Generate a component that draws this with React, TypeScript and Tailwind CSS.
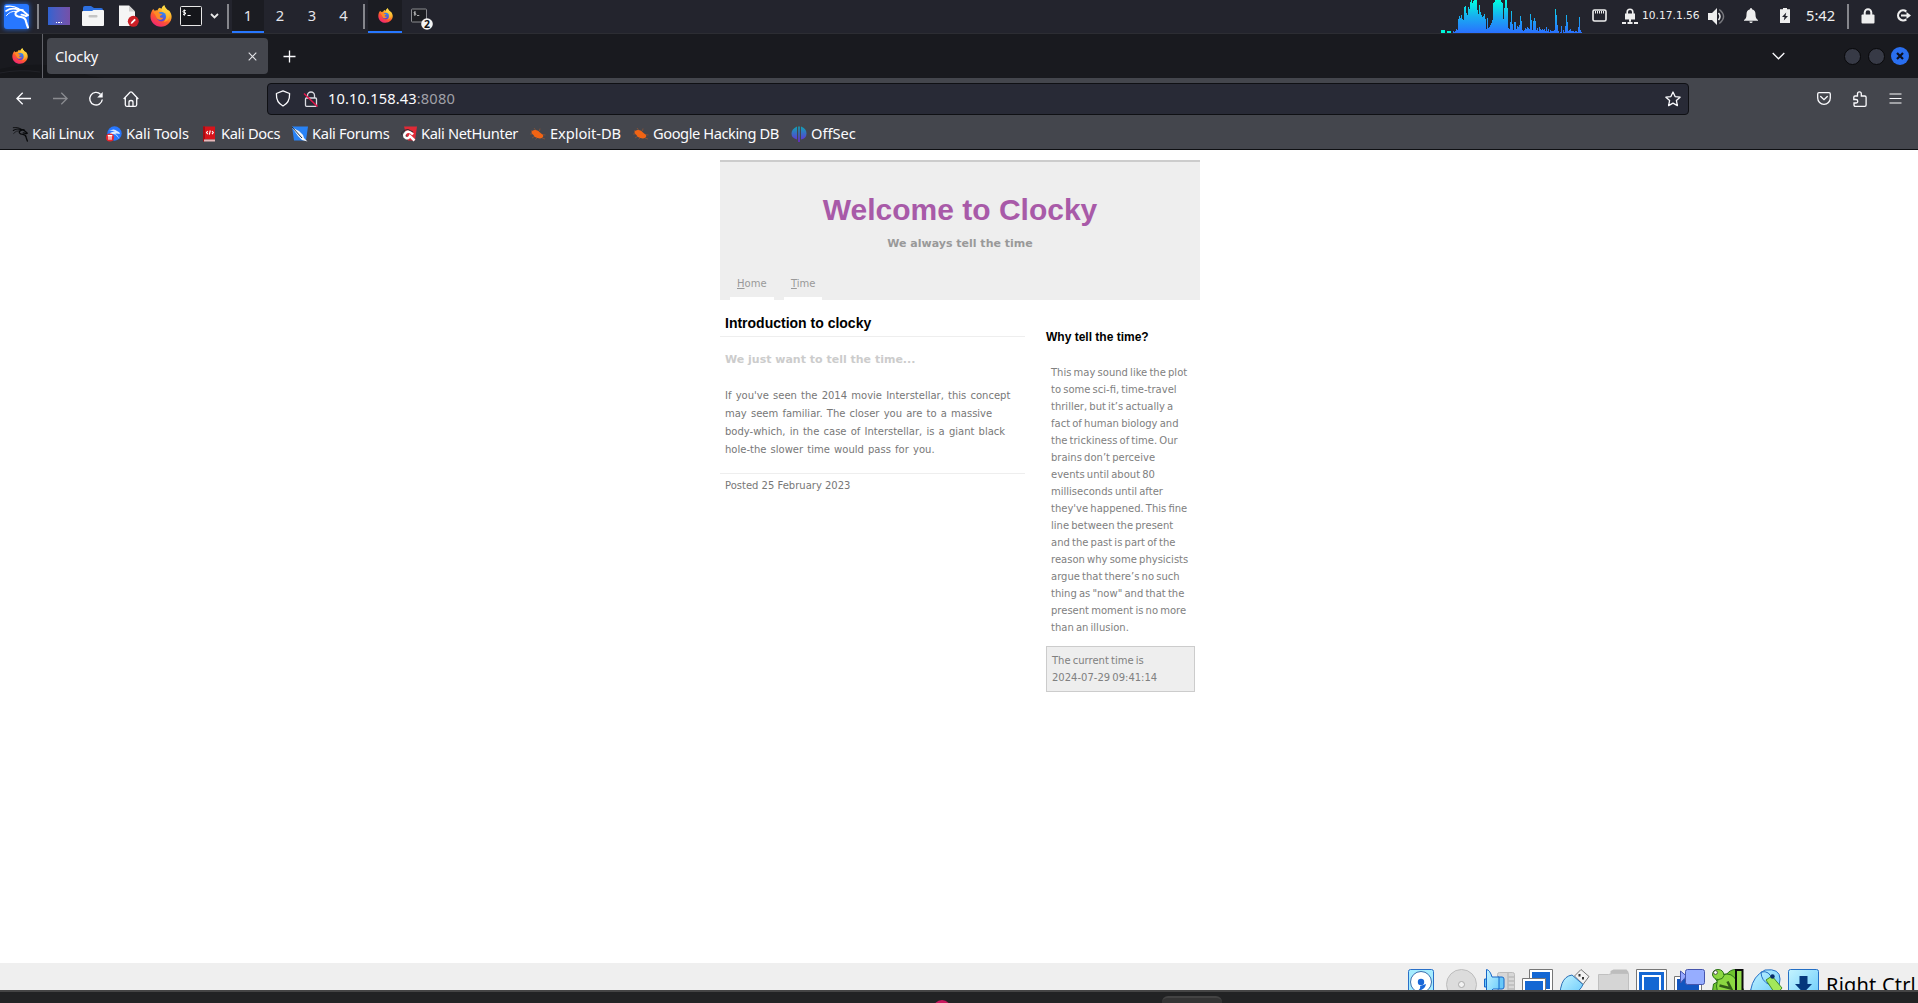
import React from "react";

const UI = "font-['Noto_Sans',sans-serif]";

function Dragon({ size, color }: { size: number; color: string }) {
  return (
    <svg width={size} height={size} viewBox="0 0 25 25" fill="none" stroke={color} strokeLinecap="round" strokeLinejoin="round">
      <path d="M2 2.500Q9 1.200 14.500 4.600" strokeWidth="1.300" />
      <path d="M2 7Q8 3 14.500 5.800L19 6" strokeWidth="1.600" />
      <path d="M2.500 11.500Q6 6.800 12 7.300" strokeWidth="1" />
      <path d="M15 5.500Q18.500 5.800 20.500 8.200L24 11.200 22 12.200Q20 10.800 17.500 10.600" strokeWidth="1.900" />
      <path d="M15 6.500Q10.500 8 11.800 11 12.800 12.800 17 13 21.500 13.600 22 17.500 22.600 20 24 23.500" strokeWidth="2.100" />
    </svg>
  );
}

function Firefox({ size, className = "" }: { size: number; className?: string }) {
  return (
    <svg width={size} height={size} viewBox="0 0 24 24" className={`shrink-0 ${className}`}>
      <defs>
        <linearGradient id="fxBody" x1="0.85" y1="0" x2="0.25" y2="1">
          <stop offset="0" stopColor="#fff44f" />
          <stop offset="0.35" stopColor="#ffb02a" />
          <stop offset="0.62" stopColor="#ff5a2c" />
          <stop offset="1" stopColor="#f0207a" />
        </linearGradient>
        <linearGradient id="fxTail" x1="0.6" y1="0" x2="0.4" y2="1">
          <stop offset="0" stopColor="#ffe54a" />
          <stop offset="1" stopColor="#ff9a20" />
        </linearGradient>
        <linearGradient id="fxGlobe" x1="0.7" y1="0" x2="0.3" y2="1">
          <stop offset="0" stopColor="#2f8ff5" />
          <stop offset="1" stopColor="#6a35c9" />
        </linearGradient>
      </defs>
      <path d="M3.6 4.4c.5 1 1 1.600 1.600 2C6 5.800 7 5.700 8.100 5.900 8.500 4.700 9.300 3.700 10.500 3.100L12.600 4.200C13 2.500 14 1.200 15.600.4c.4 1.900 1.500 3.100 3 4.400.5.500.9 1 1.200 1.600l.5-1c2 2 3.300 4.700 3.300 7.500C23.500 19 18.300 23.700 12 23.700S.5 19 .5 12.600C.5 9.500 1.700 6.500 3.600 4.400Z" fill="url(#fxBody)" />
      <path d="M15.600.4c.4 1.900 1.500 3.100 3 4.400 2.400 2.200 3.300 5 2.400 8.200-.8 3-3 5-6 5.800 1.900-2.200 2.600-5 1.600-7.300-.8-2-2.700-3.200-3.700-5C12.100 4.300 13.500 1.500 15.600.4Z" fill="url(#fxTail)" />
      <circle cx="12.300" cy="12.800" r="5.200" fill="url(#fxGlobe)" />
      <path d="M3.800 7.800c2.700-.8 5.400-.2 7 1.800l2.600.2c-.3 1.300-2.400 1.500-2.700 2.500.3 1.700 2.300 2.100 4 1.300-.9 2.500-4.300 3.400-6.500 1.800C6.500 13.700 6.400 10.500 3.800 7.800Z" fill="#ff8a26" />
    </svg>
  );
}

const Divider = ({ className = "" }: { className?: string }) => (
  <div className={`h-[25px] w-[2px] shrink-0 bg-[#85868c] ${className}`} />
);

const bars: number[] = [
  2, 1, 2, 4, 3, 14, 17, 15, 18, 14, 13, 26, 27, 20, 18, 26, 24, 31, 33, 30, 32, 33, 33, 33, 23, 19, 28, 21, 18, 16, 17, 19, 14, 4, 15, 5,
  6, 8, 10, 13, 30, 31, 33, 33, 33, 33, 33, 33, 31, 30, 14, 25, 33, 33, 25, 5, 4, 11, 22, 9, 3, 11, 11, 4, 7, 6, 8, 17, 12, 3, 2, 3, 5, 4,
  6, 5, 4, 19, 13, 3, 12, 15, 12, 3, 5, 2, 6, 4, 3, 4, 3, 4, 2, 6, 2, 4, 1, 3, 2, 2, 2, 3, 24, 18, 8, 2, 0, 1, 7, 0, 3, 1, 7, 18, 11, 2,
  3, 4, 2, 2, 2, 1, 2, 2, 1, 6, 16, 3, 1,
];

function LoadGraph() {
  return (
    <svg width="142" height="33" viewBox="0 0 142 33" className="shrink-0 self-start" shapeRendering="crispEdges">
      <defs>
        <linearGradient id="load" gradientUnits="userSpaceOnUse" x1="0" y1="0" x2="0" y2="33">
          <stop offset="0" stopColor="#00ffdf" />
          <stop offset="0.5" stopColor="#18aef0" />
          <stop offset="1" stopColor="#2a70ff" />
        </linearGradient>
      </defs>
      <path d="M0 30h4v3H0zM6 31h4v2H6z" fill="#00f5d8" />
      {bars.map((h, i) => (
        <rect key={i} x={12 + i} y={33 - h} width="1" height={h} fill="url(#load)" />
      ))}
    </svg>
  );
}

function Panel() {
  return (
    <div className={`flex h-[33px] bg-[#23242d] text-[14.67px] text-[#e4e5ea] ${UI}`}>
      <div className="flex h-[33px] items-center">
        <div className="-mt-px ml-[4px] flex size-[25px] items-center justify-center rounded-[3px] bg-[#2777ff] shadow-[0_0_4px_1px_#2777ff99]">
          <Dragon size={25} color="#fff" />
        </div>
        <Divider className="ml-[8px]" />
        <div className="-mt-px ml-[9px] flex h-[18px] w-[22px] items-end justify-center gap-px bg-linear-to-r from-[#2f62d0] to-[#7550a8] pb-[2px]">
          <i className="size-[1.500px] bg-white" />
          <i className="size-[1.500px] bg-white" />
          <i className="size-[1.500px] bg-white" />
        </div>
        <svg width="22" height="20" viewBox="0 0 22 20" className="-mt-px ml-[12px]">
          <path d="M1 7V2q0-2 2-2h6l3 2h7q2 0 2 2v3z" fill="#2d70e0" />
          <path d="M0 6q0-1 1-1h9l1.500-1H21q1 0 1 1v14q0 1-1 1H1q-1 0-1-1z" fill="#f5f5f5" />
          <rect x="6.500" y="9" width="9" height="2.500" rx="1" fill="#c4c4c4" />
        </svg>
        <svg width="22" height="22" viewBox="0 0 22 22" className="-mt-px ml-[14px]">
          <path d="M1 .500h10l6 6V21H1z" fill="#f5f5f5" />
          <path d="M11 .500v6h6z" fill="#cfcfcf" />
          <circle cx="15.300" cy="16.300" r="5.500" fill="#cc1f26" />
          <path d="m12.700 19 .6-2 3.200-3.200 1.300 1.300-3.200 3.200z" fill="#fff" />
        </svg>
        <Firefox size={22} className="-mt-px ml-[10px]" />
        <svg width="22" height="20" viewBox="0 0 22 20" className="-mt-px ml-[8px]">
          <rect x=".5" y=".5" width="21" height="19" rx="1" fill="#15161b" stroke="#e8e8e8" />
          <path d="M5.700 4.500Q3 4 3 5.300T4.500 6.500 5.500 8 3 8.200M4.300 3.500v6M7.500 9.500h3.200" fill="none" stroke="#fff" strokeWidth="1" />
        </svg>
        <svg width="9" height="6" viewBox="0 0 9 6" className="-mt-px ml-[8px]">
          <path d="m1 1 3.500 3.500L8 1" fill="none" stroke="#e8e8e8" strokeWidth="1.800" />
        </svg>
        <Divider className="ml-[8px]" />
        <div className="ml-[3px] flex h-[33px] w-[32px] items-center justify-center border-b-2 border-[#2777ff] bg-[#1b1c22] pb-px">1</div>
        <div className="flex w-[32px] justify-center pb-[3px]">2</div>
        <div className="flex w-[32px] justify-center pb-[3px]">3</div>
        <div className="flex w-[31px] justify-center pb-[3px]">4</div>
        <Divider className="ml-[4px]" />
        <div className="ml-[3px] flex h-[33px] w-[34px] items-center justify-center border-b-2 border-[#2777ff] bg-[#1b1c22]">
          <Firefox size={15} />
        </div>
        <svg width="24" height="23" viewBox="0 0 24 23" className="mt-[5px] ml-[9px]">
          <rect x=".5" y="1" width="15" height="13" rx=".8" fill="#1c1d21" stroke="#8b8c90" />
          <path d="M4.600 4Q3 3.800 3 4.700t1 .8.800 1.100-2 .2M3.900 3.200v4M6 7.500h2.300" fill="none" stroke="#d0d0d0" strokeWidth=".8" />
          <circle cx="16" cy="16" r="5.800" fill="#f4f4f4" />
          <text x="16" y="19.700" textAnchor="middle" fontSize="10.500" fontWeight="700" fill="#111" fontFamily="Noto Sans">2</text>
        </svg>
      </div>
      <div className="ml-auto flex h-[33px] items-center text-[#eeeeee]">
        <LoadGraph />
        <svg width="15" height="13" viewBox="0 0 15 13" className="-mt-[2px] ml-[9px]">
          <rect x="1" y="1" width="13" height="11" rx="1.500" fill="none" stroke="#eee" strokeWidth="1.600" />
          <path d="M3.500 2v2.500M5.500 2v2.500M7.500 2v2.500M9.500 2v2.500M11.500 2v2.500" stroke="#eee" strokeWidth="1" />
        </svg>
        <svg width="16" height="16" viewBox="0 0 16 16" className="-mt-px ml-[15px]">
          <path d="M5.200 6V4a2.800 2.800 0 0 1 5.600 0v2" fill="none" stroke="#eee" strokeWidth="1.600" />
          <path d="M3 5.500h10v6H9v2.300H7v-2.300H3zM0 14h4v2H0zM5.500 14h5v2h-5zM12 14h4v2h-4z" fill="#eee" />
        </svg>
        <span className="-mt-[2px] ml-[4px] w-[62px] font-['DejaVu_Sans',sans-serif] text-[10.67px]">10.17.1.56</span>
        <svg width="18" height="17" viewBox="0 0 18 17" className="-mt-px ml-[4px]">
          <path d="M0 5h4l5-5v17l-5-5H0z" fill="#eee" />
          <path d="M10.500 5q3 3.500 0 7" fill="none" stroke="#eee" strokeWidth="1.500" />
          <path d="M11.300 1.500q8.500 7 0 14" fill="none" stroke="#77787d" strokeWidth="1.500" />
        </svg>
        <svg width="14" height="15" viewBox="0 0 14 15" className="-mt-[2px] ml-[18px]">
          <path d="M7 0q1 0 1 1.200c2.500.5 3.500 2.500 3.500 5C11.500 9.500 12 10.500 14 12v.800H0V12c2-1.500 2.500-2.500 2.500-5.800 0-2.500 1-4.500 3.500-5Q6 0 7 0ZM5.300 13.500h3.400Q8.500 15 7 15t-1.700-1.500z" fill="#eee" />
        </svg>
        <svg width="10" height="15" viewBox="0 0 10 15" className="-mt-[2px] ml-[22px]">
          <path d="M3 0h4v1.200h3V15H0V1.200h3z" fill="#eee" />
          <path d="M6.200 4.500 2 9h2.500L3.800 12.500 8 8H5.500z" fill="#23242d" />
        </svg>
        <span className="-mt-[3px] ml-[16px] w-[30px]">5:42</span>
        <Divider className="ml-[11px]" />
        <svg width="14" height="16" viewBox="0 0 14 16" className="-mt-px ml-[12px]">
          <path d="M3.700 7V4.500a3.300 3.300 0 0 1 6.600 0V7" fill="none" stroke="#eee" strokeWidth="2" />
          <rect x=".5" y="6.500" width="13" height="9" rx="1" fill="#eee" />
        </svg>
        <svg width="15" height="13" viewBox="0 0 15 13" className="-mt-[2px] mr-[7px] ml-[21px]">
          <path d="M10.300 2.600A5 5 0 1 0 10.300 10.300" fill="none" stroke="#eee" strokeWidth="2.200" />
          <path d="M5 5.500h5.500V3L15 6.500 10.500 10V7.500H5z" fill="#eee" />
        </svg>
      </div>
    </div>
  );
}

function TabBar() {
  return (
    <div className={`relative flex h-[45px] items-center overflow-hidden border-t border-[#2c2d33] bg-[#191a1f] text-[#fbfbfe] ${UI}`}>
      <svg width="110" height="45" className="pointer-events-none absolute top-0 left-0">
        <path d="M0 35Q25 30 45 31T90 42L110 45H0z" fill="#15161a" />
        <path d="M0 39q20-4 40-1" stroke="#212228" fill="none" />
      </svg>
      <Firefox size={16} className="relative -mt-px ml-[12px]" />
      <div className="relative ml-[14px] h-[44px] w-px bg-[#62636a]" />
      <div className="relative ml-[4px] flex h-[36px] w-[221px] items-center rounded-[4px] bg-[#44464d] pl-[8px] text-[14.67px]">
        <span className="tracking-[-0.2px]">Clocky</span>
        <svg width="9" height="9" viewBox="0 0 9 9" className="mr-[11px] ml-auto">
          <path d="m.7.700 7.600 7.600M8.300.700.7 8.300" stroke="#e4e4e8" strokeWidth="1.100" />
        </svg>
      </div>
      <svg width="13" height="13" viewBox="0 0 13 13" className="mt-px ml-[15px]">
        <path d="M6.500 .500v12M.500 6.500h12" stroke="#fbfbfe" strokeWidth="1.300" />
      </svg>
      <svg width="13" height="8" viewBox="0 0 13 8" className="ml-auto">
        <path d="m.7 1 5.800 5.800L12.300 1" fill="none" stroke="#fbfbfe" strokeWidth="1.300" />
      </svg>
      <div className="ml-[59px] size-[17px] rounded-full border border-[#08080a] bg-[#373a46]" />
      <div className="ml-[7px] size-[17px] rounded-full border border-[#08080a] bg-[#373a46]" />
      <div className="mr-[9px] ml-[6px] flex size-[18px] items-center justify-center rounded-full bg-[#2a6ff0]">
        <svg width="8" height="8" viewBox="0 0 8 8">
          <path d="m1 1 6 6M7 1 1 7" stroke="#0d1020" strokeWidth="2.200" />
        </svg>
      </div>
    </div>
  );
}

function Toolbar() {
  return (
    <div className="flex h-[39px] items-center bg-[#44464d] pt-[2px] text-[#fbfbfe]">
      <svg width="15" height="13" viewBox="0 0 15 13" className="ml-[16px]">
        <path d="M6.700.7.900 6.500l5.800 5.800M1 6.500h14" fill="none" stroke="#fbfbfe" strokeWidth="1.300" />
      </svg>
      <svg width="15" height="13" viewBox="0 0 15 13" className="ml-[22px]">
        <path d="m8.300.7 5.800 5.800-5.800 5.800M14 6.500H0" fill="none" stroke="#8a8b90" strokeWidth="1.300" />
      </svg>
      <svg width="16" height="16" viewBox="0 0 16 16" className="ml-[20px]">
        <path d="M12.500 3.200A6.300 6.300 0 1 0 14.300 8.500" fill="none" stroke="#fbfbfe" strokeWidth="1.400" />
        <path d="M14.700 1v5.500H9.200z" fill="#fbfbfe" />
      </svg>
      <svg width="16" height="16" viewBox="0 0 16 16" className="ml-[19px]">
        <path d="M.7 8 7 1.300q1-.8 2 0L15.300 8M2.300 6.500v7.300q0 1.500 1.500 1.500h8.400q1.500 0 1.500-1.500V6.500M6 15v-3.800q0-1.700 2-1.700t2 1.700V15" fill="none" stroke="#fbfbfe" strokeWidth="1.300" />
      </svg>
      <div className={`ml-[128px] flex h-[32px] w-[1422px] items-center rounded-[4px] border border-[#0f1014] bg-[#282a36] text-[14.67px] ${UI}`}>
        <svg width="16" height="17" viewBox="0 0 16 17" className="ml-[7px]">
          <path d="M8 .900 14.600 3.500C14.800 9 13.200 13.500 8 16 2.800 13.500 1.200 9 1.400 3.500Z" fill="none" stroke="#fbfbfe" strokeWidth="1.300" strokeLinejoin="round" />
        </svg>
        <svg width="16" height="16" viewBox="0 0 16 16" className="ml-[12px]">
          <path d="M4.500 7V4.500a3.500 3.500 0 0 1 7 0V7M3.500 7h9q1 0 1 1v6.300q0 1-1 1h-9q-1 0-1-1V8q0-1 1-1z" fill="none" stroke="#dcdce2" strokeWidth="1.300" />
          <path d="m1 2.500 13.500 13" stroke="#e6154b" strokeWidth="1.500" />
        </svg>
        <span className="-mt-px ml-[9px] tracking-[0.13px]">10.10.158.43<span className="text-[#a0a1a8]">:8080</span></span>
        <svg width="16" height="16" viewBox="0 0 16 16" className="mr-[7px] ml-auto">
          <path d="m8 1 2.100 4.600 5 .6-3.700 3.400 1 5L8 12.100l-4.400 2.500 1-5L.9 6.200l5-.6z" fill="none" stroke="#fbfbfe" strokeWidth="1.300" strokeLinejoin="round" />
        </svg>
      </div>
      <svg width="14" height="13" viewBox="0 0 14 13" className="ml-auto">
        <path d="M2 .700h10q1.300 0 1.300 1.300v4a6.300 6.300 0 0 1-12.600 0V2Q.700.700 2 .700ZM3.700 4.500 7 7.700l3.300-3.200" fill="none" stroke="#fbfbfe" strokeWidth="1.300" strokeLinecap="round" />
      </svg>
      <svg width="14" height="16" viewBox="0 0 14 16" className="ml-[22px]">
        <path d="M4.500 4V2.800a1.900 1.900 0 0 1 3.800 0V5h3.500q1.300 0 1.300 1.300v7.700q0 1.300-1.300 1.300H2.300Q1 15.300 1 14v-2h2a1.400 1.400 0 0 0 0-3.500H.800V6.300Q.800 5 2 5h2.500z" fill="none" stroke="#fbfbfe" strokeWidth="1.300" />
      </svg>
      <svg width="13" height="11" viewBox="0 0 13 11" className="-mt-px mr-[16px] ml-[22px]">
        <path d="M.500 1h12M.500 5.500h12M.500 10h12" stroke="#fbfbfe" strokeWidth="1.200" />
      </svg>
    </div>
  );
}

const Bug = () => (
  <svg width="16" height="16" viewBox="0 0 16 16">
    <path d="M1 4.500 6 7M4 2l3 4M0 8l5 0M15.500 9 11 8.500M2 12l5-3M5.500 13.500l3-3M15 13l-3-1M10 2.500 9.500 5" stroke="#a6572c" strokeWidth=".6" />
    <path d="M1.500 5.500q1.500-2 4-1.500 3 .3 4.500 2.500l3 2.500q.7 1.500-.5 2.500-2 1.500-5 .5Q4 11 3 8.500 1 7.500 1.500 5.500z" fill="#f16414" />
  </svg>
);

const bookmarks: { label: string; box: string; icon: React.ReactNode }[] = [
  { label: "Kali Linux", box: "w-[94px] tracking-[-0.42px]", icon: <Dragon size={16} color="#07080a" /> },
  {
    label: "Kali Tools", box: "w-[95px] tracking-[-0.15px]",
    icon: (
      <svg width="16" height="16" viewBox="0 0 16 16">
        <circle cx="8.500" cy="7.500" r="7.200" fill="#2777ff" />
        <path d="M3 5q5-3 8 0 3 1 3 3-4-1-5 0 3 1 4 5-3-5-6-5T3 9q2-4 6-3-3-2-6-1z" fill="#d9e8ff" />
        <circle cx="4" cy="11.500" r="4" fill="#e8262c" />
        <path d="M1.800 9.700h4.500M3 9.700v4M5 9.700v4" stroke="#fff" strokeWidth="1.200" />
      </svg>
    ),
  },
  {
    label: "Kali Docs", box: "w-[91px] tracking-[-0.35px]",
    icon: (
      <svg width="16" height="16" viewBox="0 0 16 16">
        <path d="M2 .500h12v13H2z" fill="#d8141b" />
        <path d="M2 .500h2v15H2z" fill="#a50d13" />
        <path d="M3 13.500h11v2H3z" fill="#e8b9bb" />
        <path d="M6.800 5 5.500 6.500l1.300 1.700M11 5l1.300 1.500L11 8.200M9.300 4.500l-1 4.200" fill="none" stroke="#fff" strokeWidth="1.100" />
      </svg>
    ),
  },
  {
    label: "Kali Forums", box: "w-[109px] tracking-[-0.33px]",
    icon: (
      <svg width="16" height="16" viewBox="0 0 16 16">
        <path d="M0 .500h16L14 14.500H2z" fill="#2882f5" />
        <path d="M0 1.500 7 5l4 4 1 3 3.500 3.500L10 14 6 10Z" fill="#f3f7fb" />
        <path d="m0 1 10 11" stroke="#25303f" strokeWidth="1" />
      </svg>
    ),
  },
  {
    label: "Kali NetHunter", box: "w-[129px] tracking-[-0.35px]",
    icon: (
      <svg width="16" height="16" viewBox="0 0 16 16">
        <path d="M3 .500h13l-2 14H7z" fill="#e02a36" />
        <path d="M13.500 14.500 9 10q-1.500 3-4 2-3.500-2 0-5.500 3-2.500 7 2" fill="none" stroke="#fff" strokeWidth="2.500" />
        <path d="M0 9q1-5 7-5.500l5 2.500" fill="none" stroke="#332b30" strokeWidth="1" />
      </svg>
    ),
  },
  { label: "Exploit-DB", box: "w-[103px] tracking-[-0.05px]", icon: <Bug /> },
  { label: "Google Hacking DB", box: "w-[158px] tracking-[-0.43px]", icon: <Bug /> },
  {
    label: "OffSec", box: "w-[80px]",
    icon: (
      <svg width="16" height="16" viewBox="0 0 16 16">
        <defs>
          <linearGradient id="offsec" x1="0" y1="0" x2="0" y2="1">
            <stop offset="0" stopColor="#10a5b5" />
            <stop offset="1" stopColor="#6a27d8" />
          </linearGradient>
        </defs>
        <path d="M6 1.500v12Q.500 12 .500 7.500T6 .500zM7.200.500h1.600V16H7.200zM10 .500q5.500 2 5.500 7t-5.500 6z" fill="url(#offsec)" />
      </svg>
    ),
  },
];

function Bookmarks() {
  return (
    <div className={`flex h-[33px] items-center border-b border-[#0e0f12] bg-[#44464d] pl-[12px] text-[14.67px] text-[#fbfbfe] ${UI}`}>
      {bookmarks.map((b) => (
        <div key={b.label} className={`flex shrink-0 items-center gap-[4px] whitespace-nowrap ${b.box}`}>
          <span className="shrink-0 pt-px">{b.icon}</span>
          <span className="-mt-px">{b.label}</span>
        </div>
      ))}
    </div>
  );
}

function NavLink({ label, width }: { label: string; width: string }) {
  return (
    <a className={`border-b-[3px] border-white pb-[3px] pl-[7px] text-[10px] leading-[20px] text-[#999] ${width}`}>
      <span className="underline">{label[0]}</span>
      {label.slice(1)}
    </a>
  );
}

const sideLines = [
  "This may sound like the plot", "to some sci-fi, time-travel", "thriller, but it’s actually a", "fact of human biology and",
  "the trickiness of time. Our", "brains don’t perceive", "events until about 80", "milliseconds until after",
  "they've happened. This fine", "line between the present", "and the past is part of the", "reason why some physicists",
  "argue that there’s no such", "thing as \"now\" and that the", "present moment is no more", "than an illusion.",
];

function WebPage() {
  return (
    <div className="h-[813px] bg-white pt-[10px] font-['DejaVu_Sans',sans-serif]">
      <div className="mx-auto w-[480px] translate-x-px">
        <header className="flex h-[140px] flex-col border-t-2 border-[#ccc] bg-[#eee]">
          <h1 className="mt-[30px] text-center font-['Liberation_Sans',sans-serif] text-[30px] leading-[36px] font-bold text-[#a85aa8]">Welcome to Clocky</h1>
          <p className="mt-[7px] text-center text-[11px] leading-[18px] font-bold text-[#999]">We always tell the time</p>
          <nav className="mt-auto flex gap-[10px] pl-[10px]">
            <NavLink label="Home" width="w-[44px]" />
            <NavLink label="Time" width="w-[38px]" />
          </nav>
        </header>
        <div className="flex">
          <main className="w-[305px]">
            <h2 className="mt-[10px] h-[27px] border-b border-[#eee] pl-[5px] font-['Liberation_Sans',sans-serif] text-[14px] leading-[26px] font-bold text-black">Introduction to clocky</h2>
            <h3 className="mt-[14px] pl-[5px] text-[11px] leading-[18px] font-bold text-[#ccc]">We just want to tell the time...</h3>
            <p className="mt-[18px] pl-[5px] text-[10px] leading-[18px] whitespace-pre text-[#777] [word-spacing:1px]">
              {"If you've seen the 2014 movie Interstellar, this concept\nmay seem familiar. The closer you are to a massive\nbody-which, in the case of Interstellar, is a giant black\nhole-the slower time would pass for you."}
            </p>
            <p className="mt-[14px] border-t border-[#eee] pt-[3px] pl-[5px] text-[10px] leading-[17px] text-[#777]">Posted 25 February 2023</p>
          </main>
          <aside className="ml-[21px] w-[149px] text-[10px] leading-[17px] text-[#808080] [word-spacing:-1px]">
            <h3 className="mt-[29px] font-['Liberation_Sans',sans-serif] text-[12px] font-bold text-black [word-spacing:0px]">Why tell the time?</h3>
            <p className="mt-[18px] pl-[5px] whitespace-pre">{sideLines.join("\n")}</p>
            <div className="mt-[10px] h-[46px] border border-[#ccc] bg-[#eee] pt-[5px] pl-[5px]">
              The current time is
              <br />
              2024-07-29 09:41:14
            </div>
          </aside>
        </div>
      </div>
    </div>
  );
}

const Slot = ({ children }: { children: React.ReactNode }) => (
  <svg width="38" height="32" viewBox="0 0 38 32" className="shrink-0">
    {children}
  </svg>
);

function StatusBar() {
  return (
    <div className="flex h-[27px] items-start justify-end overflow-hidden bg-[#efefef] pt-[6px]">
      <Slot>
        <defs>
          <linearGradient id="cyan" x1="0" y1="0" x2="1" y2="1"><stop offset="0" stopColor="#c4f4ff" /><stop offset="1" stopColor="#67c9fb" /></linearGradient>
        </defs>
        <rect x=".5" y=".5" width="25" height="30" rx="2" fill="#a5ecff" stroke="#2a70c8" />
        <circle cx="13" cy="13" r="10.500" fill="#fff" stroke="#3a70b0" />
        <circle cx="13" cy="13" r="3.200" fill="#1766d8" />
        <path d="M18 15q-1 6-9 7 4-2 3-5" fill="#1766d8" />
      </Slot>
      <Slot>
        <circle cx="15.500" cy="15.500" r="15" fill="#dcdcdc" stroke="#bdbdbd" />
        <circle cx="15.500" cy="15.500" r="3" fill="#f2f2f2" stroke="#aaa" />
      </Slot>
      <Slot>
        <rect x="13.500" y="3.500" width="17" height="26" rx="2" fill="#d7d7d7" stroke="#bbb" />
        <path d="M24 4v4h6M24 8v16M24 12h6M24 16h6M24 20h6" stroke="#bcbcbc" strokeWidth="1.500" fill="none" />
        <path d="M14 8h4q2 0 2 2v8q0 2-2 2h-4zM2.500 10H.500v8h2z" fill="#68c8f8" stroke="#1766c8" />
        <path d="M2.500.500 Q6 1 8 8H15v12H9L2.500 26.500z" fill="url(#cyan)" stroke="#1766c8" />
      </Slot>
      <Slot>
        <path d="M7.500.500h23v22h-23z" fill="#fff" stroke="#777" /><path d="M10 3h18v17H10z" fill="#1467d3" />
        <path d="M.5 9.500h23v22H.5z" fill="#fff" stroke="#777" /><path d="M3 12h18v17H3z" fill="#1467d3" />
      </Slot>
      <Slot>
        <path d="m14.500 7 6.500-6.500 8 7-6 8z" fill="#f2f2f2" stroke="#777" />
        <path d="M19.500 5v2.500M23 8v2.500" stroke="#333" strokeWidth="2" />
        <path d="M2 14.500Q5 7 12 6L23 15.500q-3 7-12 11.500L0 25q0-5 2-10.500z" fill="url(#cyan)" stroke="#2a70b8" />
      </Slot>
      <Slot>
        <path d="M12.500 6V2l3-1.500h13L30.500 3v4z" fill="#bdbdbd" />
        <path d="M.5 5.500h10l4-1h16V32H.5z" fill="#d5d5d5" stroke="#c0c0c0" />
      </Slot>
      <Slot>
        <path d="M.5.500h30v29H.5z" fill="#fff" stroke="#777" /><path d="M3 3h25v24H3z" fill="#1467d3" /><path d="M7 7h17v16H7z" fill="#1467d3" stroke="#fff" strokeWidth="2" />
      </Slot>
      <Slot>
        <path d="M.5 7.500h27v22H.5z" fill="#fff" stroke="#777" /><path d="M3 10h22v17H3z" fill="#1255c0" />
        <path d="m6.500 2 6 5-6 7z" fill="#96a8ff" stroke="#4655ad" />
        <rect x="11.500" y=".5" width="19" height="15" rx="2" fill="#96adff" stroke="#4655ad" />
      </Slot>
      <Slot>
        <path d="M15 5Q18 .500 24 .500L30.500 4 26 9l6 13H.5l1-7 4-2L1 6z" fill="#6fc32e" stroke="#2e7419" />
        <ellipse cx="15" cy="17" rx="10.500" ry="12" fill="#8bd841" stroke="#2e7419" />
        <path d="M.5 6Q.5.500 6 .500t6 6q-1 4-5.500 4T.5 6z" fill="#8bd841" stroke="#2e7419" />
        <circle cx="3.500" cy="3.500" r="1.900" fill="#fff" stroke="#333" strokeWidth=".8" />
        <path d="m7.500 16.500 11.500 3-3.500-7" fill="none" stroke="#315c17" strokeWidth="2.500" />
        <path d="M24 1h6.500v30H24z" fill="#91dc4b" stroke="#0b0b0b" strokeWidth="2" />
      </Slot>
      <Slot>
        <path d="M.7 21Q3 7 15 1q15-2 15 9 0 15-14 18L.7 21z" fill="url(#cyan)" stroke="#246fc5" />
        <path d="M11 3q0 9 9 13M11 3q9-2 11 8" fill="none" stroke="#246fc5" />
        <path d="m16 11 6-4 10 12-6 7z" fill="#a3e85b" stroke="#428d2b" />
        <circle cx="22.500" cy="7.500" r="2.200" fill="#082b68" />
      </Slot>
      <Slot>
        <rect x=".5" y=".5" width="30" height="31" rx="2" fill="url(#cyan)" stroke="#246fc5" />
        <path d="M11.500 7h8v8H24L15.500 24 7 15h4.500z" fill="#04377c" />
      </Slot>
      <span className="w-[92px] font-['Noto_Sans',sans-serif] text-[20px] leading-[32px] tracking-[0.2px] whitespace-nowrap text-black">Right Ctrl</span>
    </div>
  );
}

function Dock() {
  return (
    <div className="flex h-[13px] items-start overflow-hidden border-t-2 border-[#454545] bg-[#222324]">
      <div className="mt-[8px] ml-[933px] size-[18px] shrink-0 rounded-full bg-[#c9175e]" />
      <div className="mt-[4px] ml-[211px] h-[30px] w-[60px] shrink-0 rounded-[6px] border-t-2 border-[#434343] bg-[#343434]" />
    </div>
  );
}

export default function App() {
  return (
    <div className="flex h-[1003px] w-[1918px] flex-col overflow-hidden bg-white">
      <Panel />
      <TabBar />
      <Toolbar />
      <Bookmarks />
      <WebPage />
      <StatusBar />
      <Dock />
    </div>
  );
}
